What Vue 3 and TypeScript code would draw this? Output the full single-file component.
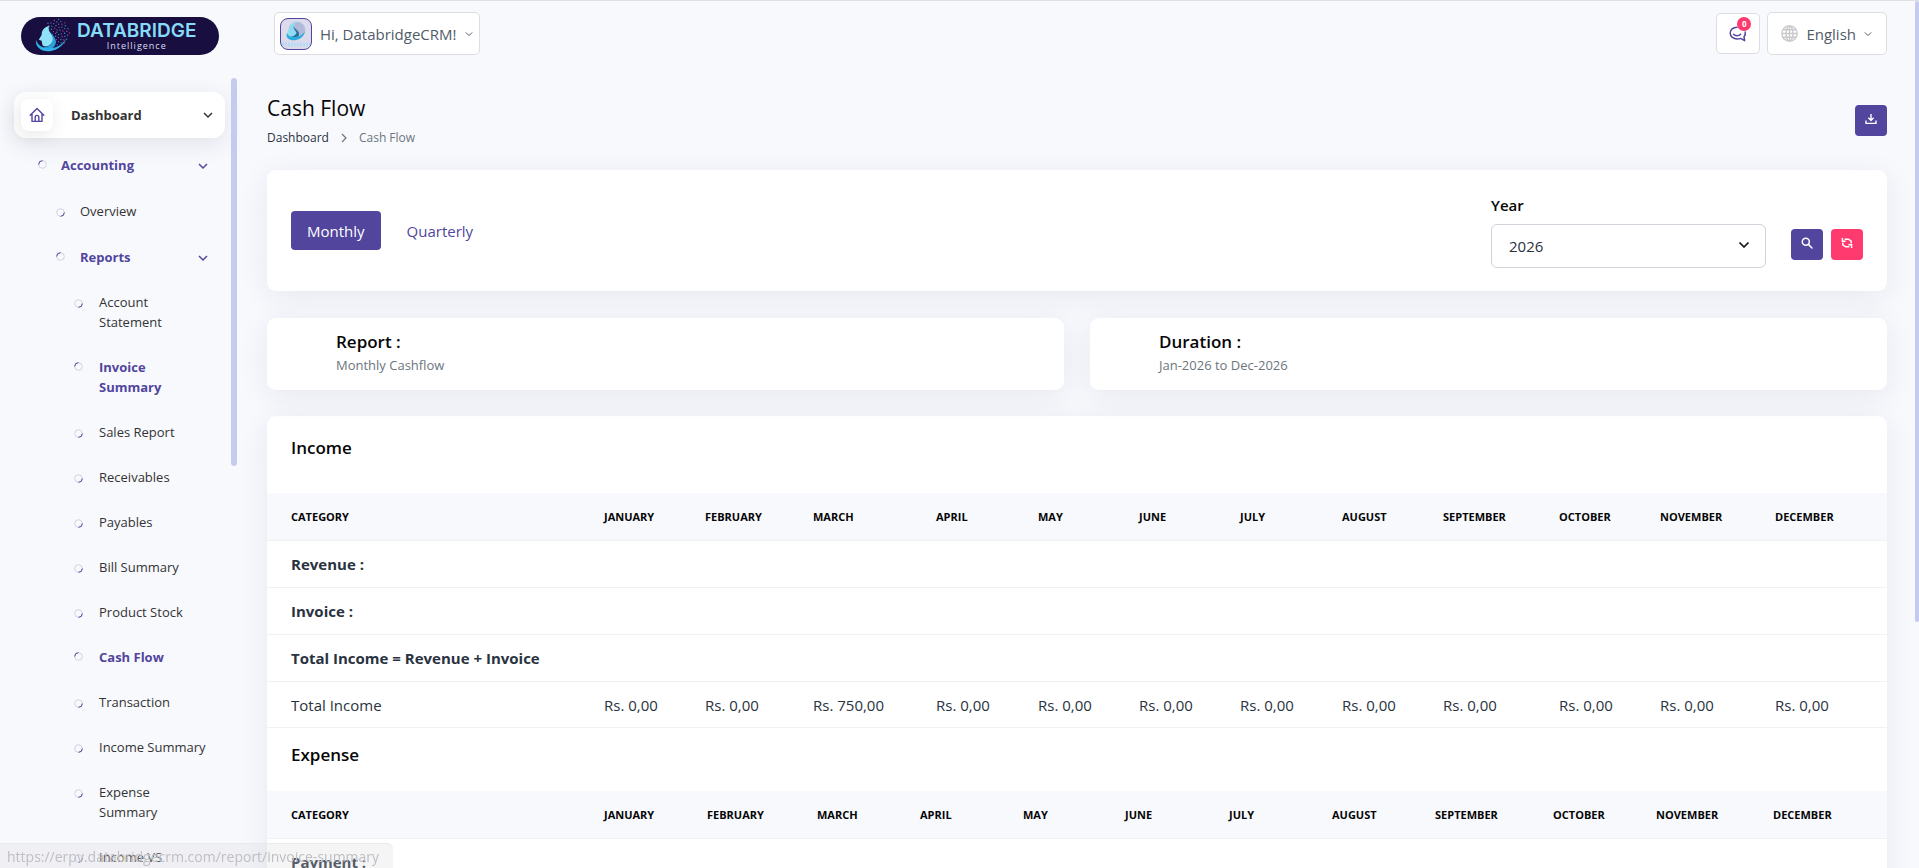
<script setup lang="ts">
import { computed, ref } from 'vue'

interface NavItem {
  label: string
  level: 1 | 2 | 3
  active?: boolean
  expandable?: boolean
}

const nav: NavItem[] = [
  { label: 'Accounting', level: 1, active: true, expandable: true },
  { label: 'Overview', level: 2 },
  { label: 'Reports', level: 2, active: true, expandable: true },
  { label: 'Account Statement', level: 3 },
  { label: 'Invoice Summary', level: 3, active: true },
  { label: 'Sales Report', level: 3 },
  { label: 'Receivables', level: 3 },
  { label: 'Payables', level: 3 },
  { label: 'Bill Summary', level: 3 },
  { label: 'Product Stock', level: 3 },
  { label: 'Cash Flow', level: 3, active: true },
  { label: 'Transaction', level: 3 },
  { label: 'Income Summary', level: 3 },
  { label: 'Expense Summary', level: 3 },
  { label: 'Income VS Expense', level: 3 },
]

const months = [
  'January', 'February', 'March', 'April', 'May', 'June',
  'July', 'August', 'September', 'October', 'November', 'December',
]

const totals = months.map((m) => (m === 'March' ? 'Rs. 750,00' : 'Rs. 0,00'))

const incomeWeights = [313, 101, 108, 123, 102, 101, 101, 102, 101, 116, 101, 115, 136]
const expenseWeights = [313, 103, 110, 103, 103, 102, 104, 103, 103, 118, 103, 117, 138]

const toShares = (weights: number[]) => {
  const sum = weights.reduce((a, b) => a + b, 0)
  return weights.map((w) => `${(w / sum) * 100}%`)
}
const incomeCols = computed(() => toShares(incomeWeights))
const expenseCols = computed(() => toShares(expenseWeights))

const period = ref<'Monthly' | 'Quarterly'>('Monthly')
const year = ref('2026')

const dots = Array.from({ length: 60 }, (_, i) => {
  const a = i * 2.4
  const r = Math.sqrt(i / 60) * 14
  return {
    x: 23 + Math.cos(a) * r,
    y: 15 + Math.sin(a) * r,
    c: ['#3f8fd6', '#b0489a', '#5a6fd0'][i % 3],
  }
}).filter((d) => d.y < 29 && d.x > 13)
</script>

<template>
  <div class="page">
    <aside class="sidebar">
      <a href="#" class="brand" aria-label="Databridge Intelligence">
        <svg class="brand-mark" viewBox="0 0 38 38" aria-hidden="true">
          <circle v-for="(d, i) in dots" :key="i" :cx="d.x" :cy="d.y" r="0.7" :fill="d.c" />
          <path d="M13 9C8 11 7 15 7 18L4 23L7 24L8 29C11 31 14 30 16 28C21 26 20 20 17 17C14 13 14 11 15 8Z" fill="#8fe3f8" />
          <path d="M15 9C13 14 21 19 18 25C16 29 13 31 9 31C15 36 23 31 22 24C21 18 14 16 15 9Z" fill="#2d9fda" />
          <path d="M1 23C0 31 7 36 16 35C24 34 30 29 33 22C28 29 22 32 15 32C8 32 3 29 1 23Z" fill="#2fb4ea" />
        </svg>
        <span class="brand-text">
          <span class="brand-name">DATABRIDGE</span>
          <span class="brand-sub">Intelligence</span>
        </span>
      </a>

      <div class="menu-area">
        <nav class="menu">
          <a href="#" class="root-item">
            <span class="root-icon">
              <svg viewBox="0 0 16 16" width="16" height="16" fill="none" stroke="#51459d" stroke-width="1.4" stroke-linejoin="round" stroke-linecap="round" aria-hidden="true">
                <path d="M1.2 8.2L8 1.6L14.8 8.2M3 7V14.4H13V7M6.2 14.2V10.2C6.2 7.8 9.8 7.8 9.8 10.2V14.2" />
              </svg>
            </span>
            <span class="root-label">Dashboard</span>
            <svg class="chev" viewBox="0 0 10 10" width="10" height="10" aria-hidden="true"><path d="M1 3L5 7L9 3" /></svg>
          </a>
          <a
            v-for="item in nav"
            :key="item.label"
            href="#"
            class="nav-item"
            :class="['level-' + item.level, { active: item.active }]"
          >
            <svg class="ring" viewBox="0 0 9 9" width="9" height="9" aria-hidden="true">
              <circle cx="4.5" cy="4.5" r="3.8" fill="none" stroke="#d2d0e2" />
              <path d="M8.3 4.5A3.8 3.8 0 0 1 4.5 8.3" fill="none" stroke="#51459d" />
            </svg>
            <span class="nav-label">{{ item.label }}</span>
            <svg v-if="item.expandable" class="chev" viewBox="0 0 10 10" width="10" height="10" aria-hidden="true"><path d="M1 3L5 7L9 3" /></svg>
          </a>
        </nav>
        <div class="menu-thumb"></div>
      </div>
    </aside>

    <main class="content">
      <header class="topbar">
        <button type="button" class="box user">
          <span class="avatar">
            <svg viewBox="0 0 30 30" aria-hidden="true">
              <circle cx="16" cy="11" r="8" fill="#b3b9d9" />
              <circle cx="16" cy="11" r="8" fill="none" stroke="#9cc9e6" stroke-dasharray="1 1" />
              <path d="M12 4C8 6 9 10 6 14L8 17C12 21 17 18 15 14C12 10 13 6 15 3Z" fill="#8edcf2" />
              <path d="M13 6C11 11 17 12 15 15C13 17 11 18 9 18C13 21 19 19 18 14C17 10 12 10 13 6Z" fill="#28709f" />
              <path d="M6 14C4 20 10 22 15 21C20 20 23 17 24 12C21 17 17 18 13 18C10 18 7 17 6 14Z" fill="#2bacdf" />
              <path d="M1 25.5H29" stroke="#b5dcf3" stroke-width="4" stroke-dasharray="2 1" />
            </svg>
          </span>
          <span>Hi, DatabridgeCRM!</span>
          <svg class="chev thin" viewBox="0 0 10 10" width="8" height="8" aria-hidden="true"><path d="M1 3L5 7L9 3" /></svg>
        </button>
        <div class="tools">
          <button type="button" class="box chat" aria-label="Messages">
            <svg viewBox="0 0 18 16" width="18" height="16" fill="none" stroke="#51459d" stroke-width="1.5" stroke-linejoin="round" stroke-linecap="round" aria-hidden="true">
              <path d="M8 1.2C4 1.2 1.2 3.8 1.2 7C1.2 10.6 4.4 13 8.4 13C9.6 13 10.6 12.8 11.6 12.4L15.6 14.6L15 10.8C16.2 9.4 16.6 7.6 16.2 6M4.6 8.2C6.4 10.2 9.8 10.2 11.6 8.2" />
            </svg>
            <span class="badge">0</span>
          </button>
          <button type="button" class="box lang">
            <svg viewBox="0 0 16 16" width="17" height="17" fill="none" stroke="#c9cacc" stroke-width="1.3" aria-hidden="true">
              <circle cx="8" cy="8" r="7.2" />
              <ellipse cx="8" cy="8" rx="3.3" ry="7.2" />
              <path d="M8 1V15M1 8H15M2 4.5H14M2 11.5H14" />
            </svg>
            <span>English</span>
            <svg class="chev thin" viewBox="0 0 10 10" width="8" height="8" aria-hidden="true"><path d="M1 3L5 7L9 3" /></svg>
          </button>
        </div>
      </header>

      <div class="heading">
        <div>
          <h1>Cash Flow</h1>
          <nav class="crumbs" aria-label="Breadcrumb">
            <a href="#">Dashboard</a>
            <svg viewBox="0 0 6 10" width="6" height="10" fill="none" stroke="#6c757d" stroke-width="1.2" aria-hidden="true"><path d="M1 1L5 5L1 9" /></svg>
            <span>Cash Flow</span>
          </nav>
        </div>
        <button type="button" class="sq download" aria-label="Download">
          <svg viewBox="0 0 12 12" width="12" height="12" fill="none" stroke="#fff" stroke-width="1.4" stroke-linejoin="round" aria-hidden="true">
            <path d="M6 1V7M3.4 4.8L6 7.4L8.6 4.8M1 7.6V10.4H11V7.6" />
          </svg>
        </button>
      </div>

      <section class="card filter">
        <div class="tabs">
          <button type="button" class="tab" :class="{ on: period === 'Monthly' }" @click="period = 'Monthly'">Monthly</button>
          <button type="button" class="tab" :class="{ on: period === 'Quarterly' }" @click="period = 'Quarterly'">Quarterly</button>
        </div>
        <form class="filter-form" @submit.prevent>
          <div class="field">
            <label for="year">Year</label>
            <div class="select-wrap">
              <select id="year" v-model="year">
                <option>2026</option>
                <option>2025</option>
                <option>2024</option>
              </select>
              <svg class="select-arrow" viewBox="0 0 12 8" width="12" height="8" fill="none" stroke="#111" stroke-width="1.7" stroke-linejoin="round" aria-hidden="true"><path d="M1.5 1.5L6 6L10.5 1.5" /></svg>
            </div>
          </div>
          <div class="actions">
            <button type="submit" class="sq" aria-label="Search">
              <svg viewBox="0 0 12 12" width="12" height="12" fill="none" stroke="#fff" stroke-width="1.5" stroke-linecap="round" aria-hidden="true"><circle cx="4.8" cy="4.8" r="3.5" /><path d="M7.4 7.4L11 11" /></svg>
            </button>
            <button type="reset" class="sq pink" aria-label="Reset">
              <svg viewBox="0 0 12 12" width="12" height="12" fill="none" stroke="#fff" stroke-width="1.5" aria-hidden="true">
                <path d="M1.4 1V4.2H4.6M3.6 2.2H7.4L10.2 4.2V6.4M10.6 11V7.8H7.4M8.4 9.8H4.6L1.8 7.8V5.6" />
              </svg>
            </button>
          </div>
        </form>
      </section>

      <div class="summary">
        <section class="card info">
          <h2>Report :</h2>
          <p>Monthly Cashflow</p>
        </section>
        <section class="card info">
          <h2>Duration :</h2>
          <p>Jan-2026 to Dec-2026</p>
        </section>
      </div>

      <section class="card report">
        <h2 class="income-title">Income</h2>
        <table>
          <colgroup><col v-for="(w, i) in incomeCols" :key="i" :style="{ width: w }" /></colgroup>
          <thead>
            <tr>
              <th scope="col">Category</th>
              <th v-for="m in months" :key="m" scope="col">{{ m }}</th>
            </tr>
          </thead>
          <tbody>
            <tr><td colspan="13" class="strong">Revenue :</td></tr>
            <tr><td colspan="13" class="strong">Invoice :</td></tr>
            <tr><td colspan="13" class="strong">Total Income = Revenue + Invoice</td></tr>
            <tr class="totals">
              <td>Total Income</td>
              <td v-for="(t, i) in totals" :key="i">{{ t }}</td>
            </tr>
          </tbody>
        </table>
        <h2 class="expense-title">Expense</h2>
        <table>
          <colgroup><col v-for="(w, i) in expenseCols" :key="i" :style="{ width: w }" /></colgroup>
          <thead>
            <tr>
              <th scope="col">Category</th>
              <th v-for="m in months" :key="m" scope="col">{{ m }}</th>
            </tr>
          </thead>
          <tbody>
            <tr><td colspan="13" class="strong">Payment :</td></tr>
          </tbody>
        </table>
      </section>
    </main>

    <div class="page-thumb"></div>
    <div class="status">https://erpv.databridgecrm.com/report/invoice-summary</div>
  </div>
</template>

<style>
html,
body {
  margin: 0;
  background: #f8f9fd;
}
</style>

<style scoped>
.page {
  box-sizing: border-box;
  display: flex;
  height: 100vh;
  overflow: hidden;
  border-top: 1px solid #dfe0e2;
  background: #f8f9fd;
  color: #293240;
  font-family: "Open Sans", "Noto Sans", sans-serif;
  font-size: 15px;
}
.page *,
.page *::before {
  box-sizing: border-box;
}
a {
  color: inherit;
  text-decoration: none;
}
button,
select {
  font: inherit;
  color: inherit;
  cursor: pointer;
}
h1,
h2,
p {
  margin: 0;
}
svg {
  flex: none;
  display: block;
}

/* Sidebar */
.sidebar {
  flex: none;
  display: flex;
  flex-direction: column;
  width: 240px;
}
.brand {
  flex: none;
  display: flex;
  align-items: center;
  gap: 6px;
  width: 198px;
  height: 38px;
  margin: 16px 0 23px 21px;
  padding-left: 14px;
  border-radius: 19px;
  background: #180f40;
  color: #86dcf7;
}
.brand-mark {
  width: 36px;
  height: 36px;
}
.brand-text {
  display: flex;
  flex-direction: column;
  align-items: center;
}
.brand-name {
  font: 600 19px/20px Inter, sans-serif;
}
.brand-sub {
  font: 9px/10px "Open Sans", sans-serif;
  letter-spacing: 1px;
  color: #d9dcf0;
}
.menu-area {
  flex: 1;
  display: flex;
  min-height: 0;
  overflow: hidden;
}
.menu {
  flex: none;
  width: 231px;
  padding: 14px 6px 0 14px;
}
.menu-thumb {
  flex: none;
  width: 6px;
  height: 388px;
  border-radius: 3px;
  background: #c5cbee;
}
.root-item {
  display: flex;
  align-items: center;
  height: 46px;
  padding: 0 12px 0 7px;
  border-radius: 12px;
  background: #fff;
  box-shadow: 0 6px 24px rgba(40, 40, 70, 0.1);
  color: #333;
  font-size: 13px;
  font-weight: 700;
}
.root-icon {
  display: grid;
  place-items: center;
  width: 32px;
  height: 32px;
  margin-right: 18px;
  border-radius: 8px;
  background: #fff;
  box-shadow: -3px 4px 20px rgba(0, 0, 0, 0.1);
}
.root-label {
  flex: 1;
}
.chev {
  fill: none;
  stroke: currentColor;
  stroke-width: 1.5;
}
.chev.thin {
  stroke-width: 1.2;
}
.nav-item {
  display: flex;
  align-items: flex-start;
  padding: 13px 17px 13px 24px;
  color: #333;
  font-size: 13px;
  line-height: 20px;
}
.nav-item.level-1 {
  padding-top: 17px;
}
.nav-item.level-2 {
  padding-left: 42px;
}
.nav-item.level-3 {
  padding: 12px 17px 13px 60px;
}
.nav-item.active {
  color: #51459d;
  font-weight: 700;
}
.ring {
  margin: 7px 14px 0 0;
}
.level-2 .ring {
  margin-right: 15px;
}
.level-3 .ring {
  margin-right: 16px;
}
.active .ring {
  margin-top: 5px;
  transform: rotate(180deg);
}
.nav-label {
  flex: 1;
}
.level-3 .nav-label {
  flex: none;
  width: 111px;
}
.nav-item .chev {
  margin-top: 6px;
}

/* Main column */
.content {
  flex: 1;
  min-width: 0;
  padding: 11px 32px 0 27px;
}
.topbar {
  display: flex;
  align-items: center;
  justify-content: space-between;
  height: 43px;
  padding-left: 7px;
}
.tools {
  display: flex;
  align-items: center;
  gap: 7px;
}
.box {
  display: flex;
  align-items: center;
  gap: 8px;
  height: 43px;
  padding: 0 6px 0 5px;
  border: 1px solid #dcdee2;
  border-radius: 5px;
  background: #fff;
  color: #525b69;
  font-size: 15px;
}
.avatar {
  width: 32px;
  height: 32px;
  border: 1px solid #51459d;
  border-radius: 8px;
  background: #dcdaeb;
  overflow: hidden;
}
.chat {
  position: relative;
  justify-content: center;
  width: 44px;
  height: 41px;
  padding: 0;
}
.badge {
  position: absolute;
  top: 3px;
  right: 8px;
  width: 14px;
  height: 14px;
  border-radius: 7px;
  background: #ff3a6e;
  color: #fff;
  font-size: 8px;
  font-weight: 700;
  line-height: 13px;
  text-align: center;
}
.lang {
  padding: 0 14px 0 13px;
}
.heading {
  display: flex;
  align-items: center;
  justify-content: space-between;
  margin: 39px 0 23px;
}
h1 {
  color: #060606;
  font-size: 21px;
  font-weight: 500;
  line-height: 28px;
}
.crumbs {
  display: flex;
  align-items: center;
  gap: 12px;
  margin-top: 7px;
  color: #6c757d;
  font-size: 12px;
  line-height: 18px;
}
.crumbs a {
  color: #293240;
}
.sq {
  display: grid;
  place-items: center;
  width: 32px;
  height: 31px;
  padding: 0 0 3px;
  border: 0;
  border-radius: 4px;
  background: #51459d;
}
.pink {
  background: #ff3a6e;
}
.card {
  border-radius: 9px;
  background: #fff;
  box-shadow: 0 6px 30px rgba(40, 44, 80, 0.08);
}
.filter {
  display: flex;
  align-items: center;
  justify-content: space-between;
  height: 121px;
  padding: 0 24px;
}
.tabs {
  display: flex;
  gap: 10px;
}
.tab {
  height: 39px;
  padding: 0 16px;
  border: 0;
  border-radius: 4px;
  background: transparent;
  color: #51459d;
  font-size: 15px;
}
.tab.on {
  background: #51459d;
  color: #fff;
}
.filter-form {
  display: flex;
  align-items: flex-end;
  gap: 25px;
}
.field label {
  display: block;
  margin-bottom: 8px;
  color: #060606;
  font-size: 15px;
  font-weight: 600;
  line-height: 22px;
}
.select-wrap {
  position: relative;
  width: 275px;
}
select {
  appearance: none;
  width: 100%;
  height: 44px;
  padding: 0 17px;
  border: 1px solid #ced4da;
  border-radius: 6px;
  background: #fff;
  color: #293240;
  font-size: 15px;
}
.select-arrow {
  position: absolute;
  top: 17px;
  right: 16px;
  pointer-events: none;
}
.actions {
  display: flex;
  gap: 8px;
  padding-bottom: 8px;
}
.summary {
  display: grid;
  grid-template-columns: 1fr 1fr;
  gap: 26px;
  margin: 27px 0 26px;
}
.info {
  padding: 12px 69px 13px;
}
h2 {
  color: #060606;
  font-size: 17px;
  font-weight: 600;
  line-height: 24px;
}
.info p {
  color: #6c757d;
  font-size: 13px;
  line-height: 23px;
}
.report {
  padding-bottom: 40px;
}
.income-title {
  padding: 20px 24px 33px;
}
.expense-title {
  padding: 15px 24px 24px;
}
table {
  width: 100%;
  table-layout: fixed;
  border-collapse: separate;
  border-spacing: 0;
}
th,
td {
  height: 47px;
  padding: 0 0 0 24px;
  border-bottom: 1px solid #f1f1f1;
  text-align: left;
  white-space: nowrap;
}
th {
  height: 48px;
  padding-bottom: 1px;
  background: #f8f9fd;
  color: #060606;
  font-size: 11px;
  font-weight: 700;
  text-transform: uppercase;
}
.totals td {
  height: 46px;
}
.strong {
  font-weight: 700;
}

/* Overlays */
.page-thumb {
  position: fixed;
  top: 1px;
  right: 0;
  width: 4px;
  height: 621px;
  border-radius: 3px;
  background: #c5cbee;
}
.status {
  position: fixed;
  bottom: 0;
  left: 0;
  height: 25px;
  padding: 0 14px 0 7px;
  border-top: 1px solid #e8e9eb;
  border-radius: 0 6px 0 0;
  background: rgba(215, 217, 220, 0.25);
  color: #bdbfc4;
  font-size: 14px;
  line-height: 26px;
}
</style>
